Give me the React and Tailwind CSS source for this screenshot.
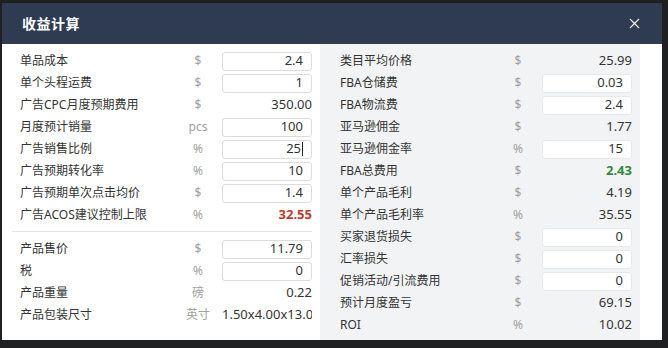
import { X } from 'lucide-react';

const leftTop = [
  { label: '单品成本', unit: '$', value: '2.4', input: true },
  { label: '单个头程运费', unit: '$', value: '1', input: true },
  { label: '广告CPC月度预期费用', unit: '$', value: '350.00' },
  { label: '月度预计销量', unit: 'pcs', value: '100', input: true },
  { label: '广告销售比例', unit: '%', value: '25', input: true, caret: true },
  { label: '广告预期转化率', unit: '%', value: '10', input: true },
  { label: '广告预期单次点击均价', unit: '$', value: '1.4', input: true },
  { label: '广告ACOS建议控制上限', unit: '%', value: '32.55', tone: 'red' },
];

const leftBottom = [
  { label: '产品售价', unit: '$', value: '11.79', input: true },
  { label: '税', unit: '%', value: '0', input: true },
  { label: '产品重量', unit: '磅', value: '0.22' },
  { label: '产品包装尺寸', unit: '英寸', value: '1.50x4.00x13.00' },
];

const right = [
  { label: '类目平均价格', unit: '$', value: '25.99' },
  { label: 'FBA仓储费', unit: '$', value: '0.03', input: true },
  { label: 'FBA物流费', unit: '$', value: '2.4', input: true },
  { label: '亚马逊佣金', unit: '$', value: '1.77' },
  { label: '亚马逊佣金率', unit: '%', value: '15', input: true },
  { label: 'FBA总费用', unit: '$', value: '2.43', tone: 'green' },
  { label: '单个产品毛利', unit: '$', value: '4.19' },
  { label: '单个产品毛利率', unit: '%', value: '35.55' },
  { label: '买家退货损失', unit: '$', value: '0', input: true },
  { label: '汇率损失', unit: '$', value: '0', input: true },
  { label: '促销活动/引流费用', unit: '$', value: '0', input: true },
  { label: '预计月度盈亏', unit: '$', value: '69.15' },
  { label: 'ROI', unit: '%', value: '10.02' },
];

function Row({ row, side }) {
  const boxBorder = side === 'left' ? 'border-[#dcdcdc]' : 'border-[#e8e9eb]';
  let valueClass = 'text-[#333]';
  if (row.tone === 'red') valueClass = 'text-[#c23a2c] font-bold';
  if (row.tone === 'green') valueClass = 'text-[#2f8a3c] font-bold';

  return (
    <div className="flex items-center h-[22px]">
      <div className="flex-1 text-[12px] text-[#333] whitespace-nowrap">{row.label}</div>
      <div className="w-[30px] text-center text-[12px] text-[#a0a0a0]">{row.unit}</div>
      <div className="ml-[9px] w-[90px]">
        {row.input ? (
          <div
            className={`h-[19px] bg-white border ${boxBorder} rounded-[3px] pr-[8px] flex items-center justify-end text-[13px] text-[#333]`}
          >
            {row.value}
            {row.caret && <span className="inline-block w-px h-[14px] bg-[#222] ml-[1px]" />}
          </div>
        ) : (
          <div className={`text-right text-[13px] overflow-hidden whitespace-nowrap ${valueClass}`}>
            {row.value}
          </div>
        )}
      </div>
    </div>
  );
}

export default function App() {
  return (
    <div
      className="w-[668px] h-[348px] bg-[#1f2022] pt-[3px] pl-[2px] pr-[6px] pb-[8px] flex"
      style={{ fontFamily: '"Noto Sans", "Noto Sans CJK SC", sans-serif' }}
    >
      <div className="flex-1 flex flex-col bg-white">
        <div className="h-[41px] bg-[#2e3b51] flex items-center justify-between pl-[20px] pr-[19px]">
          <span className="text-white text-[14px] font-bold tracking-[0.5px]">收益计算</span>
          <X className="w-[17px] h-[17px] text-white" strokeWidth={1.6} />
        </div>
        <div className="flex-1 flex">
          <div className="w-[318px] pt-[6px] pl-[18px] pr-[8px]">
            {leftTop.map((r) => (
              <Row key={r.label} row={r} side="left" />
            ))}
            <div className="mt-[5px] -ml-[8px] border-t border-[#e4e4e4] pt-[6px]">
              <div className="ml-[8px]">
                {leftBottom.map((r) => (
                  <Row key={r.label} row={r} side="left" />
                ))}
              </div>
            </div>
          </div>
          <div className="w-[320px] bg-[#f2f3f5] pt-[6px] pl-[20px] pr-[8px]">
            {right.map((r) => (
              <Row key={r.label} row={r} side="right" />
            ))}
          </div>
        </div>
      </div>
    </div>
  );
}
